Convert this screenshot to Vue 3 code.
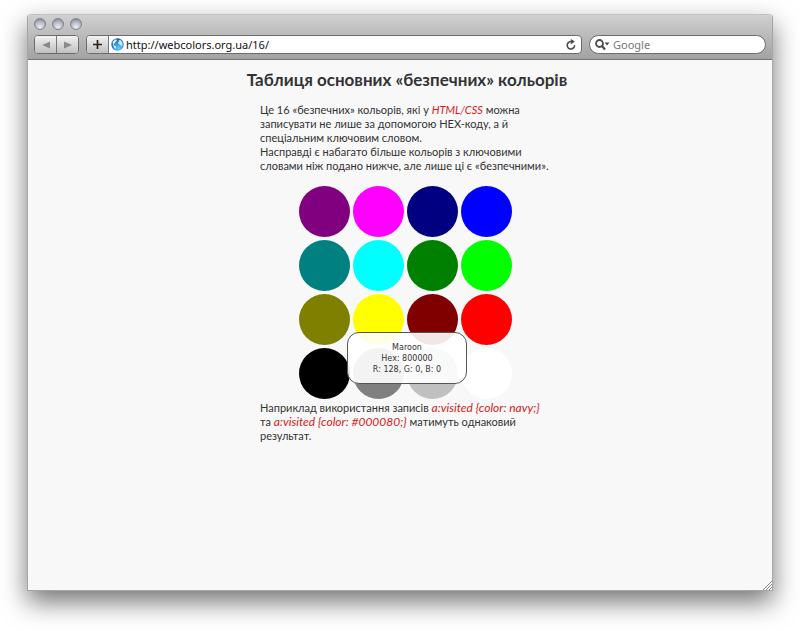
<script setup>
const rows = [
  ['purple', 'fuchsia', 'navy', 'blue'],
  ['teal', 'aqua', 'green', 'lime'],
  ['olive', 'yellow', 'maroon', 'red'],
  ['black', 'gray', 'silver', 'white'],
]
</script>

<template>
  <div class="desktop">
    <div class="window">
      <header class="chrome">
        <div class="lights"><i></i><i></i><i></i></div>
        <div class="toolbar">
          <div class="nav">
            <button aria-label="Back"><svg width="8" height="8" viewBox="0 0 8 8"><path d="M8 0.5v7L0 4z" fill="#8a8a8a" /></svg></button>
            <button aria-label="Forward"><svg width="8" height="8" viewBox="0 0 8 8"><path d="M0 0.5v7L8 4z" fill="#8a8a8a" /></svg></button>
          </div>
          <div class="address">
            <button class="add" aria-label="Add bookmark"><svg width="9" height="9" viewBox="0 0 9 9"><path d="M4.5 0v9M0 4.5h9" stroke="#222" stroke-width="1.7" /></svg></button>
            <svg class="globe" width="13" height="13" viewBox="0 0 13 13">
              <defs>
                <radialGradient id="sea" cx="0.6" cy="0.8" r="0.85">
                  <stop offset="0" stop-color="#5fd0fb" />
                  <stop offset="0.55" stop-color="#2688cc" />
                  <stop offset="1" stop-color="#164e8e" />
                </radialGradient>
              </defs>
              <circle cx="6.5" cy="6.5" r="6.2" fill="url(#sea)" />
              <path d="M1.5 4L3.8 1.6L6 1.5L5.6 3.2L4.2 4.2L4.4 5.6L2.8 5.6L3.2 7.2L5.2 8.6L4.7 11L3.2 9.8L2.3 7.4zM7.2 2.4L9.6 2L11.4 4.2L11.6 6.8L10.2 8.8L9.3 6.8L7.5 6L7 4.2L8.2 3.6z" fill="#c9e8f8" />
            </svg>
            <input class="url" type="text" aria-label="Address" value="http://webcolors.org.ua/16/" />
            <button class="reload" aria-label="Reload">
              <svg width="10" height="11" viewBox="0 0 10 11"><path d="M8.6 6.2A3.7 3.7 0 1 1 5.5 2.6" fill="none" stroke="#4b4b4b" stroke-width="1.6" /><path d="M4.8 0L8.8 2.6L4.8 5.4z" fill="#4b4b4b" /></svg>
            </button>
          </div>
          <label class="search">
            <svg width="15" height="12" viewBox="0 0 15 12"><circle cx="4.5" cy="4.5" r="3.5" fill="none" stroke="#4b4b4b" stroke-width="1.8" /><path d="M7 7L10 10.5" stroke="#4b4b4b" stroke-width="2.2" /><path d="M9.5 3.5h5L12 6.5z" fill="#4b4b4b" /></svg>
            <input type="search" aria-label="Search" placeholder="Google" />
          </label>
        </div>
      </header>

      <main class="page">
        <h1>Таблиця основних «безпечних» кольорів</h1>
        <p>
          Це 16 «безпечних» кольорів, які у <em>HTML/CSS</em> можна<br />
          записувати не лише за допомогою HEX-коду, а й<br />
          спеціальним ключовим словом.<br />
          Насправді є набагато більше кольорів з ключовими<br />
          словами ніж подано нижче, але лише ці є «безпечними».
        </p>
        <div class="palette">
          <template v-for="row in rows" :key="row[0]">
            <span v-for="name in row" :key="name" class="swatch" :style="{ background: name }"></span>
          </template>
          <div class="tip" role="tooltip">Maroon<br />Hex: 800000<br />R: 128, G: 0, B: 0</div>
        </div>
        <p class="example">
          Наприклад використання записів <em>a:visited {color: navy;}</em><br />
          та <em>a:visited {color: #000080;}</em> матимуть однаковий<br />
          результат.
        </p>
      </main>
      <svg class="grip" width="9" height="9" viewBox="0 0 9 9"><path d="M0 9L9 0M3 9L9 3M6 9L9 6" stroke="#888" stroke-width="1" /></svg>
    </div>
  </div>
</template>

<style>
body {
  background: #fff;
}
</style>

<style scoped>
.desktop {
  display: flex;
  box-sizing: border-box;
  min-height: 100vh;
  padding: 14px 27px 40px;
}
.window {
  position: relative;
  flex: 1;
  border: 1px solid #a6a6a6;
  border-top-color: #c4c4c4;
  border-radius: 4px 4px 0 0;
  background: #f8f8f8;
  box-shadow: 0 11px 26px rgba(0, 0, 0, 0.55);
}
.chrome {
  padding: 3px 6px 5px;
  border-bottom: 1px solid #777;
  border-radius: 3px 3px 0 0;
  background: linear-gradient(#d0d0d0, #a2a2a2);
}
.lights {
  display: flex;
  gap: 6px;
}
.lights i {
  box-sizing: border-box;
  width: 12px;
  height: 12px;
  border: 1px solid #80838a;
  border-radius: 50%;
  background: radial-gradient(circle at 50% 80%, #eceef2, #b8bcc6 50%, #747a86);
}
.toolbar {
  display: flex;
  gap: 7px;
  height: 19px;
  margin-top: 5px;
}
button {
  display: flex;
  align-items: center;
  justify-content: center;
  margin: 0;
  padding: 0;
  border: 0;
  background: none;
}
.nav,
.address,
.search {
  display: flex;
  align-items: center;
  box-sizing: border-box;
  overflow: hidden;
  border: 1px solid #6c6c6c;
  border-radius: 4px;
  background: #fff;
}
.nav button,
.add {
  width: 22px;
  height: 17px;
  background: linear-gradient(#f2f2f2, #c0c0c0);
}
.nav button + button {
  border-left: 1px solid #777;
}
.nav {
  width: 45px;
}
.address {
  flex: 1;
}
.add {
  border-right: 1px solid #777;
}
.globe {
  margin-left: 2px;
}
input {
  flex: 1;
  min-width: 0;
  height: 17px;
  padding: 0;
  border: 0;
  outline: 0;
  background: none;
  color: #111;
  font: 11px/17px "Noto Sans", sans-serif;
}
.url {
  margin-left: 2px;
}
.reload {
  margin-right: 5px;
}
.search {
  width: 177px;
  padding: 0 8px 0 5px;
  gap: 3px;
  border-radius: 10px;
}
.search input {
  appearance: none;
}
.search input::placeholder {
  color: #777;
  opacity: 1;
}
.page {
  display: flex;
  flex-direction: column;
  align-items: center;
  color: #333;
}
h1 {
  margin: 9px 0 0 14px;
  font: bold 17px/22px Lato, "Noto Sans", sans-serif;
  white-space: nowrap;
}
p {
  width: 290px;
  margin: 12px 0 0 10px;
  font: 11px/14px Lato, "Noto Sans", sans-serif;
  white-space: nowrap;
}
em {
  color: #d71920;
}
.palette {
  position: relative;
  display: grid;
  grid-template-columns: repeat(4, 51px);
  gap: 3px;
  margin: 13px 0 0 11px;
}
.swatch {
  height: 51px;
  border-radius: 50%;
}
.tip {
  position: absolute;
  top: 146px;
  left: 48px;
  box-sizing: border-box;
  width: 120px;
  padding: 9px 0 8px;
  border: 1px solid #555;
  border-radius: 12px;
  background: rgba(255, 255, 255, 0.9);
  color: #333;
  font: 8px/11px "DejaVu Sans", sans-serif;
  text-align: center;
}
.example {
  margin-top: 2px;
}
.example em {
  font-size: 12px;
  line-height: 1;
}
.grip {
  position: absolute;
  right: 0;
  bottom: 0;
}
</style>
